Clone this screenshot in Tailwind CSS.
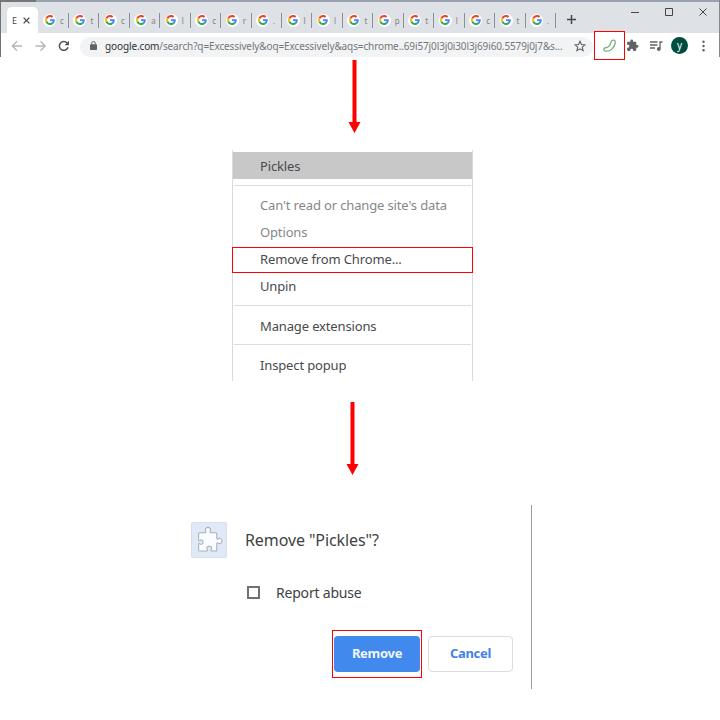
<!DOCTYPE html>
<html lang="en">
<head>
<meta charset="utf-8">
<title>Remove an extension from Chrome</title>
<script src="https://cdn.jsdelivr.net/npm/@tailwindcss/browser@4"></script>
</head>
<body class="bg-white">
<svg class="hidden">
  <symbol id="g" viewBox="0 0 48 48">
    <path fill="#EA4335" d="M24 9.5c3.54 0 6.71 1.22 9.21 3.6l6.85-6.85C35.9 2.38 30.47 0 24 0 14.62 0 6.51 5.38 2.56 13.22l7.98 6.19C12.43 13.72 17.74 9.5 24 9.5z"/>
    <path fill="#4285F4" d="M46.98 24.55c0-1.57-.15-3.09-.38-4.55H24v9.02h12.94c-.58 2.96-2.26 5.48-4.78 7.18l7.73 6c4.51-4.18 7.09-10.36 7.09-17.65z"/>
    <path fill="#FBBC05" d="M10.53 28.59c-.48-1.45-.76-2.99-.76-4.59s.27-3.14.76-4.59l-7.98-6.19C.92 16.46 0 20.12 0 24c0 3.88.92 7.54 2.56 10.78l7.97-6.19z"/>
    <path fill="#34A853" d="M24 48c6.48 0 11.93-2.13 15.89-5.81l-7.73-6c-2.15 1.45-4.92 2.3-8.16 2.3-6.26 0-11.57-4.22-13.47-9.91l-7.98 6.19C6.51 42.62 14.62 48 24 48z"/>
  </symbol>
  <symbol id="puzzle" viewBox="0 0 24 24">
    <path d="M20.5 11H19V7c0-1.1-.9-2-2-2h-4V3.5a2.5 2.5 0 0 0-5 0V5H4c-1.1 0-2 .9-2 2v3.800h1.500a2.700 2.700 0 0 1 0 5.400H2V20c0 1.100.9 2 2 2h3.800v-1.500a2.700 2.700 0 0 1 5.400 0V22H17c1.100 0 2-.9 2-2v-4h1.500a2.500 2.500 0 0 0 0-5z"/>
  </symbol>
</svg>
<main class="flex h-[720px] w-[720px] flex-col overflow-hidden bg-white font-['Noto_Sans','Open_Sans',sans-serif]">
  <header class="relative h-[57px] border-x border-l-[#737373] border-r-[#858891] bg-white">
    <div class="flex h-0.5 bg-[#9ba3b1]"><span class="w-[35px] bg-[#777]"></span></div>
    <div class="flex h-[31px] bg-[#dee1e6] pl-1.5">
      <div class="mt-[5px] flex h-[26px] w-[31px] items-center rounded-t-[5px] bg-white pl-[5px]">
        <span class="mt-px w-[6px] text-[9px] text-[#45484c]">E</span>
        <svg class="ml-[5px] size-[7px]" viewBox="0 0 7 7" stroke="#45484c" stroke-width="1.300"><path d="M.6.6l5.800 5.800M6.400.6L.6 6.400"/></svg>
      </div>
      <div id="tabs" class="mt-[5px] ml-[0.5px] flex h-[26px]"></div>
      <svg class="mt-[13px] ml-[11.5px] size-[9px]" viewBox="0 0 9 9" stroke="#45484c" stroke-width="1.500"><path d="M4.500 0v9M0 4.500h9"/></svg>
      <svg class="mt-[5px] mr-3 ml-auto h-[9px] w-[76px]" viewBox="0 0 76 9" fill="none" stroke="#444" stroke-width="1"><path d="M0 5.500h8M34.500 1.500h7v7h-7zM68.500 1.500l7 7M75.500 1.500l-7 7"/></svg>
    </div>
    <div class="flex h-6 items-center">
      <svg class="mt-0.5 ml-2.5 h-3 w-[60px]" viewBox="0 0 60 12" fill="none" stroke-width="1.300">
        <path stroke="#b4b6b9" d="M11 6H1.500M6 1.300L1.300 6 6 10.700M24.500 6H34M29.500 1.300L34.200 6l-4.700 4.700"/>
        <path stroke="#505357" stroke-width="1.500" d="M57 7.300a4.400 4.400 0 1 1-.9-4.300"/>
        <path fill="#505357" d="M58 .8v4.500h-4.500z"/>
      </svg>
      <div class="mt-[3px] ml-[9px] flex h-5 w-[513px] shrink-0 items-center rounded-full bg-[#f1f3f4] pl-2.5">
        <svg class="-mt-0.5 h-[9px] w-[7px] shrink-0" viewBox="0 0 7 9"><rect y="3.300" width="7" height="5.700" rx=".8" fill="#5f6368"/><path d="M1.700 3.500V2.300a1.800 1.800 0 0 1 3.600 0v1.200" fill="none" stroke="#5f6368"/></svg>
        <span class="-mt-0.5 ml-2 w-[459px] shrink-0 whitespace-nowrap text-[10px] leading-5 tracking-[-0.12px] text-[#74777a]"><span class="text-[#303236]">google.com</span>/search?q=Excessively&amp;oq=Excessively&amp;aqs=chrome..69i57j0l3j0i30l3j69i60.5579j0j7&amp;s...</span>
        <svg class="-mt-0.5 ml-[10px] size-3 shrink-0" viewBox="0 0 24 24" fill="none" stroke="#5f6368" stroke-width="2.200"><path d="M12 2.500l2.900 6.600 7.100.6-5.400 4.700 1.600 7L12 17.700l-6.200 3.700 1.600-7L2 9.700l7.100-.6z"/></svg>
      </div>
      <svg class="mt-px ml-[33px] size-[13px] shrink-0 fill-[#5f6368]"><use href="#puzzle"/></svg>
      <svg class="mt-px ml-[11px] h-3 w-[13px]" viewBox="0 0 13 12"><path d="M0 2h7.500M0 5h7.500M0 8h5M10 8.500V2h2.500" fill="none" stroke="#5f6368" stroke-width="1.300"/><circle cx="8.800" cy="9" r="1.900" fill="#5f6368"/></svg>
      <span class="mt-px ml-[8px] flex size-[17px] items-center justify-center rounded-full bg-[#004d40] pb-0.5 text-[10px] leading-none text-white">y</span>
      <svg class="mt-0.5 ml-[14px] h-3 w-[3px] fill-[#5f6368]" viewBox="0 0 3 12"><circle cx="1.500" cy="1.700" r="1.200"/><circle cx="1.500" cy="6" r="1.200"/><circle cx="1.500" cy="10.300" r="1.200"/></svg>
    </div>
    <div class="absolute top-[31px] left-[593px] flex h-[29px] w-[31px] items-center justify-center border border-[#f00] bg-white">
      <svg class="h-[13px] w-[13px]" viewBox="0 0 13 13" fill="none" stroke="#62a86a" stroke-width="1.100"><path d="M9.500 1.300C11.500.3 12.800 2 12 5 11 8.800 7.500 12.300 3.500 12.300 1 12.300.2 10.500 1.300 9.300 2.800 8.300 5.500 8.800 6.800 6.300 7.800 4.300 7.500 2.300 9.500 1.300z"/></svg>
    </div>
  </header>
  <svg class="mt-[3px] ml-[348px] h-[73px] w-[13px] shrink-0 fill-[#f00]" viewBox="0 0 13 73"><path d="M4.500 0h4v62H12.500L6.500 73 .5 62h4z"/></svg>
  <section class="relative mt-[17px] ml-[232px] flex h-[231px] w-[241px] shrink-0 flex-col border-x border-[#d9dadb] pt-0.5 text-[13px] tracking-[-0.14px] text-[#484a4d]">
    <div class="h-[27px] bg-[#c8c8c8] pl-[27px] leading-[28px]">Pickles</div>
    <hr class="mx-px mt-[6px] border-[#dcdde0]">
    <div class="mt-[6px] h-[27px] pl-[27px] leading-[27px] whitespace-nowrap text-[#85878a]">Can't read or change site's data</div>
    <div class="h-[27px] pl-[27px] leading-[27px] text-[#85878a]">Options</div>
    <div class="h-[27px] pl-[27px] leading-[27px]">Remove from Chrome...</div>
    <div class="h-[27px] pl-[27px] leading-[27px]">Unpin</div>
    <hr class="mx-px mt-[5px] border-[#dcdde0]">
    <div class="mt-[7px] h-[27px] pl-[27px] leading-[27px]">Manage extensions</div>
    <hr class="mx-px mt-[4px] border-[#dcdde0]">
    <div class="mt-[7px] h-[27px] pl-[27px] leading-[27px]">Inspect popup</div>
    <div class="absolute top-[97px] -left-px h-[26px] w-[241px] border border-[#f00]"></div>
  </section>
  <svg class="mt-[21px] ml-[346px] h-[73px] w-[13px] shrink-0 fill-[#f00]" viewBox="0 0 13 73"><path d="M4.500 0h4v62H12.500L6.500 73 .5 62h4z"/></svg>
  <section class="mt-[30px] ml-[173px] flex h-[184px] w-[359px] shrink-0 flex-col border-r border-[#999ca0] text-[#3f4245]">
    <div class="mt-[17px] ml-[18px] flex h-9 items-center">
      <span class="flex size-9 items-center justify-center rounded-[2px] border border-[#d5dff0] bg-[#e0e9f6]">
        <svg class="-mt-[3px] size-[28px] shrink-0" viewBox="0 0 27 27"><path d="M4.500 7.500h5.500c.8 0 .8-1 .3-1.500C9.200 4.500 10.300 2.300 12.500 2.300S15.800 4.500 14.700 6c-.5.500-.5 1.500.3 1.500h5c.6 0 1 .4 1 1V13c0 .8.8.9 1.300.4 1.700-1.300 3.700-.1 3.700 2s-2 3.300-3.700 2c-.5-.5-1.300-.4-1.300.4V24c0 .6-.4 1-1 1h-4c-.8 0-.8-.9-.3-1.400 1-1.500 0-3.100-2-3.100s-3 1.600-2 3.100c.5.5.5 1.400-.3 1.400H4.500c-.6 0-1-.4-1-1v-5.500c0-.8.8-.8 1.300-.3 1.500 1 3 .2 3-1.700s-1.500-2.700-3-1.700c-.5.5-1.300.5-1.300-.3V8.500c0-.6.4-1 1-1z" fill="#fbfcfe" stroke="#a5afc0" stroke-width="1"/></svg>
      </span>
      <h1 class="ml-[18px] whitespace-nowrap text-[16px] leading-9 tracking-[-0.1px]">Remove "Pickles"?</h1>
    </div>
    <div class="mt-[24px] ml-[74px] flex h-[20px] items-center">
      <span class="size-[13px] border-2 border-[#6e7175]"></span>
      <span class="ml-[16px] text-[14px] tracking-[-0.2px] whitespace-nowrap">Report abuse</span>
    </div>
    <div class="mt-[28px] ml-[159px] flex h-12 items-center text-[13px] font-bold tracking-[-0.3px]">
      <div class="flex h-12 w-[90px] items-center justify-center border border-[#f00]">
        <button class="-mt-px h-9 w-[86px] rounded-[4px] bg-[#4189ec] pt-px text-white/95">Remove</button>
      </div>
      <button class="-mt-px ml-1.5 h-9 w-[85px] rounded-[4px] border border-[#dadce0] pt-px text-[#4380e8]">Cancel</button>
    </div>
  </section>
</main>
<script>
const titles = ['c','t','c','a','l','c','r','.','l','l','t','p','t','l','c','t','.'];
document.getElementById('tabs').innerHTML = titles.map(t => `
  <div class="flex w-[30.45px] shrink-0 items-center">
    <span class="ml-[4.5px] flex size-[13px] shrink-0 items-center justify-center rounded-full bg-white"><svg class="size-[10px]"><use href="#g"/></svg></span>
    <span class="mt-0.5 ml-[4px] w-[5px] shrink-0 text-[8px] text-[#8b7f79]">${t}</span>
    <span class="ml-auto h-[15px] w-px bg-[#8b8f96]"></span>
  </div>`).join('');
</script>
</body>
</html>
